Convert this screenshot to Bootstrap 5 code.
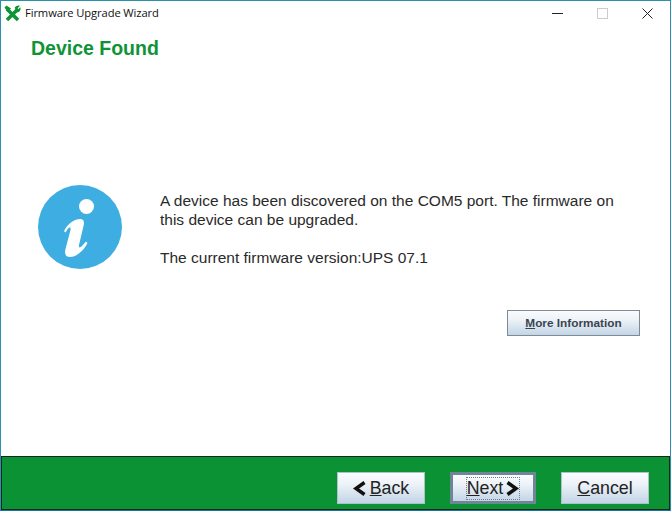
<!DOCTYPE html>
<html lang="en">
<head>
  <meta charset="UTF-8" />
  <title>Firmware Upgrade Wizard</title>
  <meta name="viewport" content="width=device-width, initial-scale=1.0" />
  <link href="https://cdn.jsdelivr.net/npm/bootstrap@5.3.2/dist/css/bootstrap.min.css" rel="stylesheet" />
  <style>
    html, body {
      height: 100%;
      overflow: hidden;
    }

    body {
      font-family: "Liberation Sans", Arial, sans-serif;
      background-color: #fff;
      color: #222;
    }

    .wizard-window {
      width: 671px;
      height: 511px;
      border: 1px solid #2b8fb0;
      border-bottom-color: #1f6fa8;
    }

    .title-bar {
      height: 25px;
      padding-left: 3px;
    }

    .title-text {
      font-family: "Open Sans", "Liberation Sans", sans-serif;
      font-size: 11.2px;
      color: #111;
      margin-left: 4px;
      letter-spacing: -0.1px;
    }

    .win-btn {
      width: 45px;
      height: 25px;
    }

    .wizard-heading {
      font-size: 19.5px;
      font-weight: 700;
      color: #0f9337;
      line-height: 24px;
      margin: 10px 0 0 30px;
    }

    .wizard-main {
      height: 428px;
    }

    .wizard-body {
      padding-left: 37px;
      padding-right: 30px;
    }

    .message-row {
      margin-top: 125px;
    }

    .message-text {
      font-size: 15.5px;
      line-height: 19px;
      margin-left: 38px;
      margin-top: 6px;
      color: #2a2a2a;
    }

    .message-text p {
      margin: 0 0 19px;
    }

    .gui-btn {
      border: 1px solid #7f8a94;
      border-radius: 0;
      padding: 0;
      color: #222;
      background: linear-gradient(to bottom, #fafcfe 0%, #eef3f8 35%, #c3d5e6 100%);
      display: flex;
      align-items: center;
      justify-content: center;
    }

    .more-btn {
      width: 133px;
      height: 26px;
      padding-top: 2px;
      font-size: 11.8px;
      font-weight: 700;
      color: #3a4450;
      margin-left: auto;
      margin-top: 24px;
    }

    .footer-bar {
      height: 54px;
      background-color: #0a9234;
      border: 1px solid #0b2a1a;
      padding-top: 15px;
      padding-right: 20px;
      gap: 25px;
    }

    .footer-btn {
      width: 88px;
      height: 32px;
      font-size: 17.8px;
      border-color: #a9c4c9;
      gap: 4px;
    }

    .footer-btn.is-default {
      width: 86px;
      border: 3px solid #6f8696;
    }

    .focus-box {
      border: 1px dotted #6f7f8c;
      display: flex;
      align-items: center;
      gap: 3px;
      height: 23px;
    }
  </style>
</head>
<body>
  <div class="wizard-window d-flex flex-column">
    <!-- Title bar -->
    <div class="title-bar d-flex align-items-center">
      <svg width="17" height="17" viewBox="0 0 17 17">
        <path d="M3 4L14 15M14 4L3 15" stroke="#0f9337" stroke-width="3.600" fill="none"/>
        <path d="M0.500 2.500L2.500 0.500L7 3.500L3.500 7Z" fill="#0f9337"/>
        <path d="M10.800 2.200Q13 0 16 0.800L13.600 3.200L14 4.200L16.500 2.200Q17 5.500 14.500 7.200H12Z" fill="#0f9337"/>
      </svg>
      <span class="title-text">Firmware Upgrade Wizard</span>
      <div class="ms-auto d-flex">
        <div class="win-btn d-flex align-items-center justify-content-center">
          <svg width="11" height="11" viewBox="0 0 11 11"><path d="M0 5.500H11" stroke="#222" stroke-width="1"/></svg>
        </div>
        <div class="win-btn d-flex align-items-center justify-content-center">
          <svg width="11" height="11" viewBox="0 0 11 11"><rect x="0.500" y="0.500" width="10" height="10" fill="none" stroke="#ccc"/></svg>
        </div>
        <div class="win-btn d-flex align-items-center justify-content-center">
          <svg width="11" height="11" viewBox="0 0 11 11"><path d="M0.500 0.500L10.500 10.500M10.500 0.500L0.500 10.500" stroke="#222" stroke-width="1"/></svg>
        </div>
      </div>
    </div>

    <div class="wizard-main">
      <h1 class="wizard-heading">Device Found</h1>
      <div class="wizard-body">
        <div class="message-row d-flex align-items-start">
          <svg class="flex-shrink-0" width="84" height="84" viewBox="0 0 84 84">
            <circle cx="42" cy="42" r="42" fill="#3eaee2"/>
            <circle cx="48.500" cy="21.500" r="7.500" fill="#fff"/>
            <path d="M26 46 C30 38 37 34 42 34 C46 34 46.500 37 45.500 41 L41 60 C40.500 63 42 63 44 61 L48 56.500 L49.500 58 C46 65 39 72 32 72 C27 72 26.500 68 27.500 64 L32.500 45 C33 42 31.500 42 30 43.500 L27.500 47.500 Z" fill="#fff"/>
          </svg>
          <div class="message-text">
            <p>A device has been discovered on the COM5 port. The firmware on<br>this device can be upgraded.</p>
            <p>The current firmware version:UPS 07.1</p>
          </div>
        </div>
        <button class="btn gui-btn more-btn" type="button"><span><u>M</u>ore Information</span></button>
      </div>
    </div>

    <!-- Footer -->
    <div class="footer-bar d-flex justify-content-end align-items-start mt-auto">
      <button class="btn gui-btn footer-btn" type="button">
        <svg width="13" height="15" viewBox="0 0 13 15"><path d="M11.500 1.500L3 7.500L11.500 13.500" fill="none" stroke="#111" stroke-width="3.500"/></svg>
        <span><u>B</u>ack</span>
      </button>
      <button class="btn gui-btn footer-btn is-default" type="button">
        <span class="focus-box"><span><u>N</u>ext</span>
        <svg width="13" height="15" viewBox="0 0 13 15"><path d="M1.500 1.500L10 7.500L1.500 13.500" fill="none" stroke="#111" stroke-width="3.500"/></svg></span>
      </button>
      <button class="btn gui-btn footer-btn" type="button"><span><u>C</u>ancel</span></button>
    </div>
  </div>
  <script src="https://cdn.jsdelivr.net/npm/bootstrap@5.3.2/dist/js/bootstrap.bundle.min.js"></script>
</body>
</html>
